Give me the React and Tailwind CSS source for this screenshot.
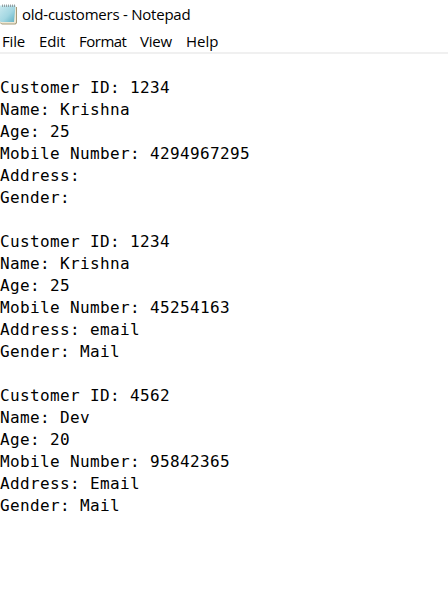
const customers = [
  { id: "1234", name: "Krishna", age: "25", mobile: "4294967295", address: "", gender: "" },
  { id: "1234", name: "Krishna", age: "25", mobile: "45254163", address: "email", gender: "Mail" },
  { id: "4562", name: "Dev", age: "20", mobile: "95842365", address: "Email", gender: "Mail" },
];

function NotepadIcon() {
  return (
    <svg width="18" height="22" viewBox="0 0 18 22" className="shrink-0">
      <defs>
        <linearGradient id="page" x1="0" y1="0" x2="1" y2="1">
          <stop offset="0" stopColor="#c9e9ef" />
          <stop offset="0.55" stopColor="#a3d7e2" />
          <stop offset="1" stopColor="#5fb0c3" />
        </linearGradient>
      </defs>
      <path d="M0 3H17V19L15.5 20.5H2L0 19Z" fill="#a69a78" />
      <path d="M0 2.5H16V18.5L15 19.5H2L0 18.5Z" fill="#eee9d6" />
      <path d="M0 1.5H15.5L14 18H1.5L0 17.5Z" fill="url(#page)" />
      <path d="M2.5 0.5V3M4.5 0.5V3M6.5 0.5V3M8.5 0.5V3M10.5 0.5V3M12.5 0.5V3M14.5 0.5V3" stroke="#8c9699" strokeWidth="0.9" />
    </svg>
  );
}

function Customer({ customer }) {
  return (
    <section className="whitespace-pre">
      <p>Customer ID: {customer.id}</p>
      <p>Name: {customer.name}</p>
      <p>Age: {customer.age}</p>
      <p>Mobile Number: {customer.mobile}</p>
      <p>Address: {customer.address}</p>
      <p>Gender: {customer.gender}</p>
    </section>
  );
}

export default function App() {
  return (
    <div className="flex h-[592px] w-[448px] flex-col overflow-hidden bg-white text-black">
      <header className="flex h-[30px] items-start gap-1 pt-1 font-['Open_Sans',sans-serif]">
        <NotepadIcon />
        <h1 className="whitespace-nowrap text-[15px] leading-5 tracking-[-0.23px]">old-customers - Notepad</h1>
      </header>
      <nav className="flex h-[22px] shrink-0 items-center pl-0.5 font-['Open_Sans',sans-serif] text-[15px] leading-5">
        <span className="w-[37px] tracking-[-0.2px]">File</span>
        <span className="w-10 tracking-[-0.1px]">Edit</span>
        <span className="w-[61px] tracking-[-0.5px]">Format</span>
        <span className="w-[46px] tracking-[-0.2px]">View</span>
        <span>Help</span>
      </nav>
      <main className="flex flex-1 flex-col gap-[22px] border-t-2 border-[#f0f0f0] pt-[23px] font-['DejaVu_Sans_Mono',monospace] text-[16px] leading-[22px] tracking-[0.368px]">
        {customers.map((customer, index) => (
          <Customer key={index} customer={customer} />
        ))}
      </main>
    </div>
  );
}
